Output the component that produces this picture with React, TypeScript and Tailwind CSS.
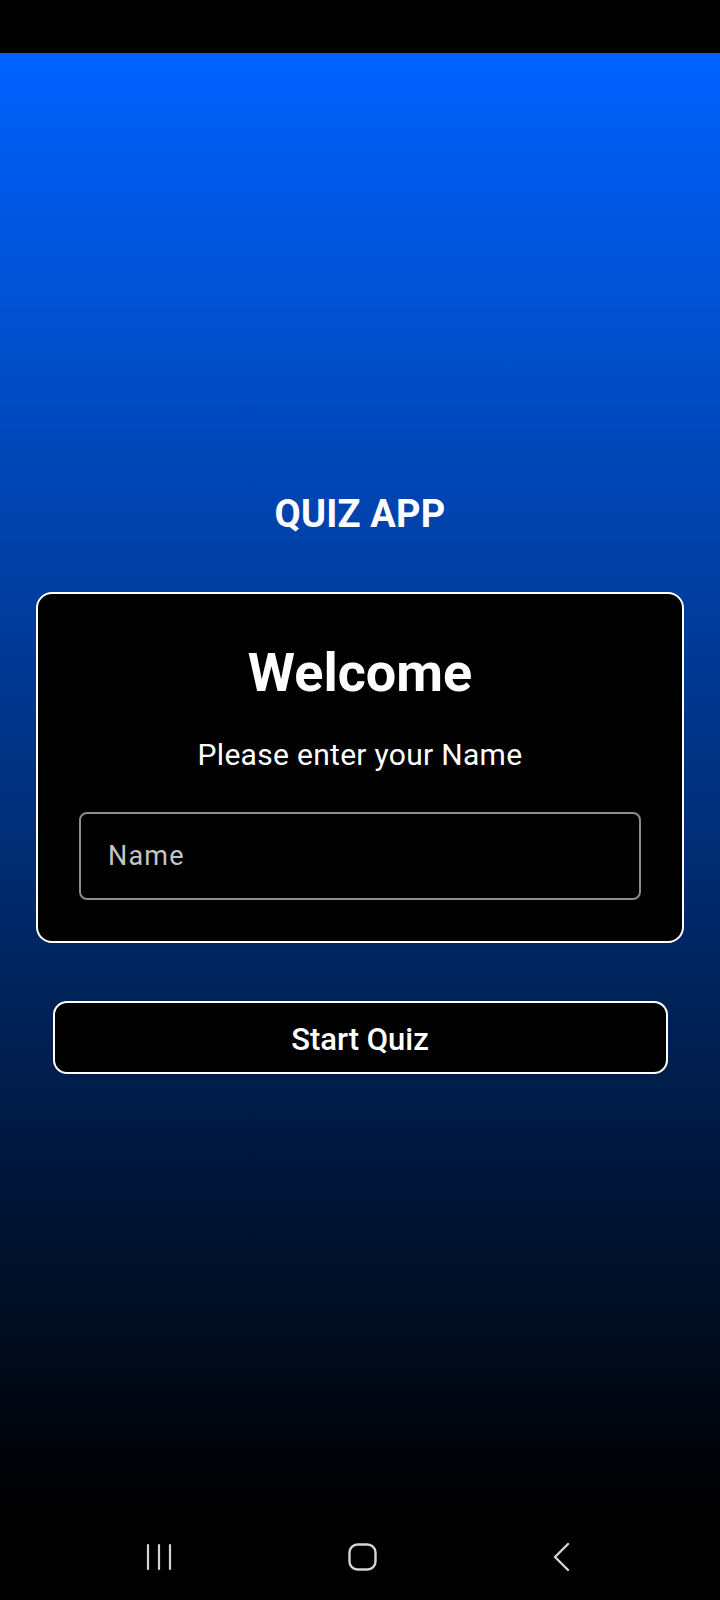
import React from "react";

export default function App() {
  return (
    <div
      className="w-[720px] h-[1600px] flex flex-col bg-black overflow-hidden"
      style={{ fontFamily: "Roboto, 'Noto Sans', sans-serif" }}
    >
      <div className="h-[53px] bg-black shrink-0" />
      <main className="h-[1457px] shrink-0 bg-[linear-gradient(to_bottom,#0062ff_0%,#000000_100%)] flex flex-col items-center pt-[442px]">
        <h1 className="text-white font-bold text-[38px] leading-[38px] tracking-[0.2px]">QUIZ APP</h1>
        <section className="mt-[59px] w-[648px] rounded-[16px] border-2 border-white bg-black px-[41px] pt-[52px] pb-[41px] flex flex-col items-center">
          <h2 className="text-white font-bold text-[54px] leading-[54px]">Welcome</h2>
          <p className="mt-[40px] text-white text-[30px] leading-[30px] tracking-[0.3px]">Please enter your Name</p>
          <div className="mt-[42px] w-full h-[88px] rounded-[8px] border-2 border-[#8c8c8c] flex items-center pl-[27px]">
            <input
              className="bg-transparent outline-none w-full text-[27px] text-white placeholder:text-[#c4c4c4] tracking-[1.2px]"
              placeholder="Name"
              style={{ fontFamily: "Roboto, sans-serif" }}
            />
          </div>
        </section>
        <button className="mt-[58px] w-[615px] h-[73px] rounded-[14px] border-2 border-white bg-black text-white font-medium text-[31px] leading-[31px] pt-[3px]">
          Start Quiz
        </button>
      </main>
      <nav className="h-[90px] shrink-0 bg-black flex items-center justify-between pl-[146px] pr-[150px] pt-[4px]">
        <svg width="26" height="28" viewBox="0 0 26 28" fill="none" stroke="#d4d4d4" strokeWidth="2.2" strokeLinecap="round">
          <line x1="2" y1="2" x2="2" y2="26" />
          <line x1="13" y1="2" x2="13" y2="26" />
          <line x1="24" y1="2" x2="24" y2="26" />
        </svg>
        <svg width="29" height="28" viewBox="0 0 29 28" fill="none" stroke="#d4d4d4" strokeWidth="2.4">
          <rect x="1.5" y="1.5" width="26" height="25" rx="8" />
        </svg>
        <svg width="17" height="30" viewBox="0 0 17 30" fill="none" stroke="#d4d4d4" strokeWidth="2.4" strokeLinecap="round" strokeLinejoin="round">
          <polyline points="15,2 2,15 15,28" />
        </svg>
      </nav>
    </div>
  );
}
